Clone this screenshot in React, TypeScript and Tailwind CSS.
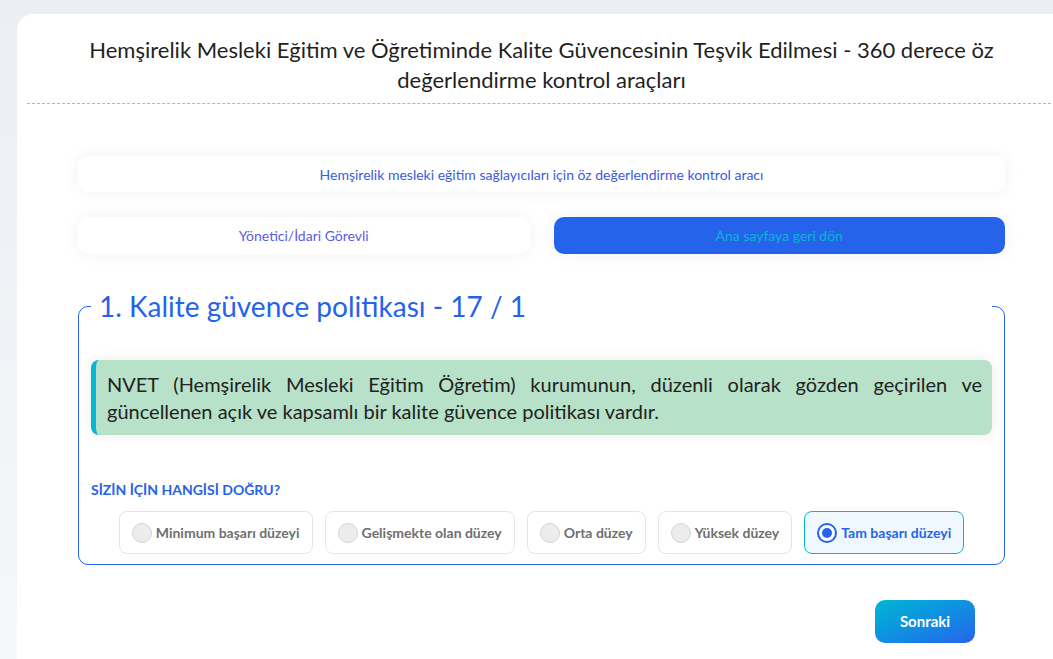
const options = [
  { label: "Minimum başarı düzeyi", selected: false },
  { label: "Gelişmekte olan düzey", selected: false },
  { label: "Orta düzey", selected: false },
  { label: "Yüksek düzey", selected: false },
  { label: "Tam başarı düzeyi", selected: true },
];

const App = () => {
  return (
    <div className="h-[659px] overflow-hidden bg-gradient-to-b from-[#eceef4] to-[#f6f7fa] pl-[17px] pt-[14px] font-['Lato',sans-serif]">
      <div className="h-[700px] w-[1049px] rounded-tl-2xl bg-white">
        <div className="px-[10px] pt-[21px]">
          <h1 className="px-10 text-center text-[22px] leading-[30px] text-[#1f1f1f]">
            Hemşirelik Mesleki Eğitim ve Öğretiminde Kalite Güvencesinin Teşvik Edilmesi - 360 derece öz değerlendirme kontrol araçları
          </h1>
          <hr className="mt-[8px] border-0 border-t border-dashed border-[#b5b5b5]" />
        </div>

        <div className="px-[61px] pt-[52px]">
          <div className="flex h-[36px] items-center justify-center rounded-[10px] bg-white text-[14px] text-[#3b5bdb] shadow-[0_0_18px_rgba(0,0,0,0.06)]">
            Hemşirelik mesleki eğitim sağlayıcıları için öz değerlendirme kontrol aracı
          </div>

          <div className="mt-[25px] grid grid-cols-2 gap-6">
            <button className="h-[37px] rounded-[10px] bg-white text-[14px] text-[#5b5be6] shadow-[0_0_18px_rgba(0,0,0,0.06)]">
              Yönetici/İdari Görevli
            </button>
            <button className="h-[37px] rounded-[10px] bg-[#2563eb] text-[14px] text-[#06b6d4] shadow-[0_0_18px_rgba(0,0,0,0.06)]">
              Ana sayfaya geri dön
            </button>
          </div>

          <fieldset className="mt-[34px] rounded-[10px] border border-[#2563eb] px-3 pb-[10px]">
            <legend className="w-full bg-white px-2 text-[28px] leading-[36px] text-[#2563eb]">
              1. Kalite güvence politikası - 17 / 1
            </legend>

            <div className="mt-[36px] rounded-[8px] border-l-[5px] border-[#06b6d4] bg-[#b7e1c8] pb-[10px] pl-[11px] pr-[10px] pt-[11px] text-justify text-[20px] leading-[27px] text-[#222] shadow-[0_0_14px_rgba(0,0,0,0.08)]">
              NVET (Hemşirelik Mesleki Eğitim Öğretim) kurumunun, düzenli olarak gözden geçirilen ve güncellenen açık ve kapsamlı bir kalite güvence politikası vardır.
            </div>

            <p className="mt-[44px] text-[14px] font-bold text-[#2563eb]">SİZİN İÇİN HANGİSİ DOĞRU?</p>

            <div className="mt-[11px] flex justify-center gap-3">
              {options.map((o) => (
                <label
                  key={o.label}
                  className={
                    o.selected
                      ? "flex h-[43px] items-center gap-[4px] rounded-[8px] border border-[#06b6d4] bg-[#f0f8ff] px-[12px] text-[14px] font-bold text-[#2563eb]"
                      : "flex h-[43px] items-center gap-[4px] rounded-[8px] border border-[#e2e5ea] bg-white px-[12px] text-[14px] font-bold text-[#6f6f6f]"
                  }
                >
                  {o.selected ? (
                    <span className="flex h-[20px] w-[20px] items-center justify-center rounded-full border-2 border-[#2563eb] bg-white">
                      <span className="h-[10px] w-[10px] rounded-full bg-[#2563eb]" />
                    </span>
                  ) : (
                    <span className="h-[20px] w-[20px] rounded-full border border-[#d4d4d4] bg-[#ececec]" />
                  )}
                  {o.label}
                </label>
              ))}
            </div>
          </fieldset>

          <div className="mt-[35px] flex justify-end pr-[30px]">
            <button className="h-[43px] w-[100px] rounded-[10px] bg-gradient-to-br from-[#06b6d4] to-[#2563eb] text-[15px] font-bold text-white">
              Sonraki
            </button>
          </div>
        </div>
      </div>
    </div>
  );
};

export default App;
